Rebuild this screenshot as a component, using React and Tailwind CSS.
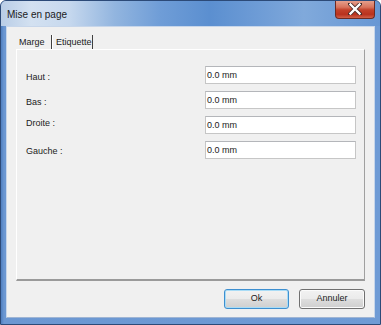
import React from "react";

const font = { fontFamily: '"Liberation Sans", Arial, sans-serif' };

function Field({ label, mt }) {
  return (
    <div className="flex h-[25px]">
      <div className={`w-[188px] pl-[9px] text-[9px] leading-[11px] text-[#222222] ${mt}`}>{label}</div>
      <div className="w-[151px] h-[18px] bg-white border border-[#c6c6c6] border-t-[#b4b6ba] pl-[1px] text-[9px] leading-[16px] text-[#1a1a1a]">
        0.0 mm
      </div>
    </div>
  );
}

export default function App() {
  return (
    <div
      className="w-[381px] h-[325px] flex flex-col relative overflow-hidden border border-[#2c4a78] rounded-t-[6px]"
      style={{
        ...font,
        background:
          "linear-gradient(90deg,#4f7fc0 0,#6b97d2 3px,#6f9bd5 100%)",
      }}
    >
      {/* title bar */}
      <div
        className="h-[25px] shrink-0 flex items-start pl-[6px] pt-[8px] relative"
        style={{
          background:
            "linear-gradient(90deg,#b9cde6 0%,#d3e1f1 8%,#c6d8ee 18%,#92b5df 30%,#6f9dd7 42%,#5b8fd0 55%,#6e9cd6 68%,#80a9db 80%,#6797d4 100%)",
        }}
      >
        <span className="text-[10px] leading-[12px] text-[#1b1b1b]">Mise en page</span>
        <div
          className="absolute right-[5px] top-[-1px] w-[40px] h-[19px] rounded-b-[4px] border border-[#6e2a22] border-t-0 flex items-center justify-center"
          style={{
            background:
              "linear-gradient(180deg,#e8a693 0%,#d8735c 40%,#c3412a 55%,#b9321e 80%,#d06048 100%)",
          }}
        >
          <svg width="14" height="12" viewBox="0 0 14 12">
            <path d="M2 1 L12 11 M12 1 L2 11" stroke="#4a2a26" strokeWidth="4" strokeLinecap="square" />
            <path d="M2.5 1.5 L11.5 10.5 M11.5 1.5 L2.5 10.5" stroke="#ffffff" strokeWidth="2.4" strokeLinecap="square" />
          </svg>
        </div>
      </div>

      {/* body row */}
      <div className="flex-1 flex px-[5px] pb-[6px]">
        <div className="flex-1 border border-[#c7d6ea] bg-[#f0f0f0] border-b-[#9fb5d4] flex flex-col">
          <div className="flex-1 flex flex-col pl-[9px] pt-[8px] pr-[9px]">
            {/* tabs */}
            <div className="flex h-[14px] text-[9px] leading-[11px] text-[#1a1a1a]">
              <div className="pl-[3px] w-[36px] pt-[2px] border-r border-[#404040]">Marge</div>
              <div className="pl-[3px] w-[41px] pt-[2px] border-l border-white border-r border-r-[#404040]">Etiquette</div>
            </div>
            {/* panel */}
            <div className="h-[232px] border border-t-white border-l-white border-r-[#a0a0a0] border-b-[#9a9a9a] border-b-2 pt-[16px]">
              <Field label="Haut :" mt="mt-[6px]" />
              <Field label="Bas :" mt="mt-[6px]" />
              <Field label="Droite :" mt="mt-[2px]" />
              <Field label="Gauche :" mt="mt-[5px]" />
            </div>
            {/* buttons */}
            <div className="flex justify-end gap-[10px] mt-[8px]">
              <div
                className="w-[65px] h-[20px] rounded-[3px] border border-[#3d8fd0] flex items-center justify-center text-[9px] text-[#1a1a1a]"
                style={{ background: "linear-gradient(180deg,#f2f2f2 0%,#ebebeb 48%,#dddddd 52%,#cfcfcf 100%)", boxShadow: "inset 0 0 0 1px #a9dcf6" }}
              >
                Ok
              </div>
              <div
                className="w-[66px] h-[20px] rounded-[3px] border border-[#707070] flex items-center justify-center text-[9px] text-[#1a1a1a]"
                style={{ background: "linear-gradient(180deg,#f2f2f2 0%,#ebebeb 48%,#dddddd 52%,#cfcfcf 100%)", boxShadow: "inset 0 0 0 1px #fbfbfb" }}
              >
                Annuler
              </div>
            </div>
          </div>
        </div>
      </div>
    </div>
  );
}
